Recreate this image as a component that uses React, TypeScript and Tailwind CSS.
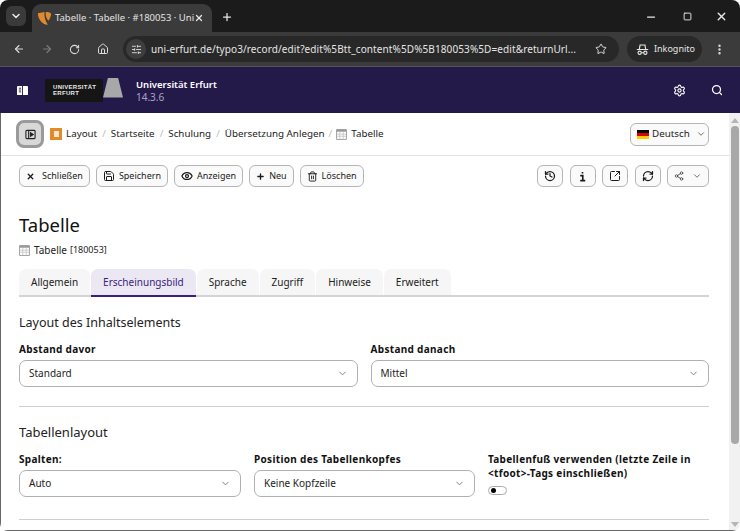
import {
  ArrowLeft,
  ArrowRight,
  ChevronDown,
  Eye,
  History,
  Home,
  Minus,
  MoreVertical,
  Plus,
  RefreshCw,
  RotateCw,
  Save,
  Search,
  Settings,
  Share2,
  SlidersHorizontal,
  Square,
  SquareArrowOutUpRight,
  Star,
  Trash2,
  X,
} from 'lucide-react';
import type { ReactNode } from 'react';

const tabs = ['Allgemein', 'Erscheinungsbild', 'Sprache', 'Zugriff', 'Hinweise', 'Erweitert'];

function TableIcon({ className }: { className?: string }) {
  return (
    <svg viewBox="0 0 16 16" className={className}>
      <rect x="1" y="1" width="14" height="14" fill="#fff" stroke="#777" />
      <rect x="1" y="1" width="14" height="3" fill="#999" />
      <path d="M1 7.5h14M1 10.5h14M5.5 4v11M10.5 4v11" stroke="#bbb" />
    </svg>
  );
}

function DocButton({ icon, label }: { icon: ReactNode; label: string }) {
  return (
    <button className="flex h-[22px] items-center gap-[4px] rounded-[6px] border border-[#b5b5b5] bg-[#fafafa] px-[6px] text-[9px] text-[#1a1a1a]">
      {icon}
      {label}
    </button>
  );
}

function IconButton({ children, wide }: { children: ReactNode; wide?: boolean }) {
  return (
    <button
      className={`flex h-[22px] items-center justify-center gap-[8px] rounded-[6px] border border-[#b5b5b5] bg-[#fafafa] text-[#1a1a1a] ${
        wide ? 'w-[42px]' : 'w-[26px]'
      }`}
    >
      {children}
    </button>
  );
}

function SelectField({ label, value, className }: { label: string; value: string; className: string }) {
  return (
    <div className={className}>
      <div className="mb-[4px] text-[10px] leading-[14px] font-bold tracking-[0.32px] text-[#111]">{label}</div>
      <div className="flex h-[27px] items-center justify-between rounded-[7px] border border-[#b0b0b0] bg-white pr-[9px] pl-[9px] text-[10px] text-[#222]">
        {value}
        <ChevronDown className="h-[11px] w-[11px] text-[#777]" />
      </div>
    </div>
  );
}

export default function App() {
  return (
    <div className="flex h-[531px] w-[740px] flex-col overflow-hidden rounded-[8px] bg-white font-['Noto_Sans',sans-serif]">
      {/* browser tab strip */}
      <div className="flex h-[32px] items-end bg-[#1b1b1b] pl-[6px] text-[#e8e8e8]">
        <div className="mb-[6px] flex h-[20px] w-[20px] items-center justify-center rounded-[6px] bg-[#3a3a3a]">
          <ChevronDown className="h-[12px] w-[12px]" strokeWidth={3} />
        </div>
        <div className="ml-[6px] flex h-[28px] w-[180px] items-center rounded-t-[9px] bg-[#3b3b3b] pr-[8px] pl-[5px]">
          <svg viewBox="0 0 16 16" className="h-[15px] w-[15px] shrink-0">
            <path d="M1 2.500 8 1C7.500 6 9 11 11.500 14.500 6.500 16 .5 8 1 2.500Z" fill="#e08a2c" />
            <path d="M9.500 1c2.500 0 5.500.5 5.500 2.500 0 2-1.500 5-2.800 7C10 8 8.500 4 9.500 1Z" fill="#e08a2c" />
          </svg>
          <span className="ml-[3px] min-w-0 flex-1 text-[9.500px] whitespace-nowrap text-[#e3e3e3]">
            Tabelle · Tabelle · #180053 · Uni
          </span>
          <X className="h-[10px] w-[10px] shrink-0" strokeWidth={3} />
        </div>
        <Plus className="mb-[9px] ml-[9px] h-[12px] w-[12px]" strokeWidth={2.5} />
        <div className="mb-[9px] ml-auto flex items-center pr-[12px]">
          <Minus className="h-[12px] w-[12px]" strokeWidth={2.5} />
          <Square className="ml-[26px] h-[9px] w-[9px]" strokeWidth={2.5} />
          <X className="ml-[23px] h-[13px] w-[13px]" strokeWidth={2.5} />
        </div>
      </div>
      {/* browser toolbar */}
      <div className="flex h-[35px] items-center border-b border-[#555] bg-[#3b3b3b] pl-[13px] text-[#dcdcdc]">
        <ArrowLeft className="h-[12px] w-[12px]" strokeWidth={2.2} />
        <ArrowRight className="ml-[16px] h-[12px] w-[12px] text-[#7b7b7b]" strokeWidth={2.2} />
        <RotateCw className="ml-[16px] h-[11px] w-[11px]" strokeWidth={2.2} />
        <Home className="ml-[17px] h-[12px] w-[12px]" strokeWidth={2} />
        <div className="ml-[14px] flex h-[26px] w-[496px] items-center rounded-full bg-[#282828]">
          <div className="ml-[3px] flex h-[20px] w-[20px] items-center justify-center rounded-full bg-[#3e3e3e]">
            <SlidersHorizontal className="h-[11px] w-[11px]" />
          </div>
          <span className="ml-[5px] w-[428px] text-[10px] tracking-[0.1px] whitespace-nowrap text-[#e6e6e6]">
            uni-erfurt.de/typo3/record/edit?edit%5Btt_content%5D%5B180053%5D=edit&amp;returnUrl...
          </span>
          <Star className="ml-[16px] h-[12px] w-[12px]" strokeWidth={2} />
        </div>
        <div className="ml-[8px] flex h-[26px] w-[75px] items-center rounded-full bg-[#282828] pl-[9px] text-[9px] text-[#e6e6e6]">
          <svg viewBox="0 0 16 16" className="h-[13px] w-[13px]" fill="none" stroke="currentColor" strokeWidth="1.4">
            <path d="M1 8h14M4 8l1-5.500h6L12 8" />
            <circle cx="4.500" cy="12" r="2" />
            <circle cx="11.500" cy="12" r="2" />
            <path d="M6.500 12h3" />
          </svg>
          <span className="ml-[5px]">Inkognito</span>
        </div>
        <MoreVertical className="ml-[11px] h-[13px] w-[13px]" strokeWidth={2.5} />
      </div>
      {/* typo3 top bar */}
      <div className="flex h-[46px] items-center bg-[#241a4a] pl-[17px] text-white">
        <svg viewBox="0 0 12 12" className="h-[11px] w-[11px]">
          <rect x="0" y="1" width="12" height="10" rx="1" fill="#fff" />
          <path d="M6 1v10" stroke="#241a4a" />
          <path d="M2 3.500h2.500M2 5.500h2.500M2 7.500h2.500" stroke="#241a4a" />
        </svg>
        <div className="ml-[17px] flex h-[23px] w-[78px] items-center">
          <div className="flex h-[23px] w-[58px] flex-col justify-center bg-[#151515] pl-[8px] font-['Liberation_Sans',sans-serif] text-[6px] leading-[6.500px] font-bold tracking-[0.3px] text-[#e8e8e8]">
            <span>UNIVERSITÄT</span>
            <span>ERFURT</span>
          </div>
          <div className="mb-[4px] h-[20px] w-[20px] self-end bg-[#a8a8a8] [clip-path:polygon(25%_0,75%_0,100%_100%,0_100%)]" />
        </div>
        <div className="ml-[13px] flex flex-col">
          <span className="text-[9.500px] leading-[13px] font-semibold">Universität Erfurt</span>
          <span className="text-[10px] leading-[12px] text-[#a9a4c4]">14.3.6</span>
        </div>
        <Settings className="mr-[25px] ml-auto h-[13px] w-[13px]" />
        <Search className="mr-[17px] h-[12px] w-[12px]" strokeWidth={2.5} />
      </div>
      {/* module content with scrollbar */}
      <div className="flex min-h-0 flex-1 border-b border-l border-[#666] bg-white">
        <div className="min-w-0 flex-1">
          {/* breadcrumb */}
          <div className="flex h-[43px] items-center border-b border-[#e2e2e2] pr-[20px] pl-[15px] text-[9.800px] text-[#222]">
            <div className="flex h-[28px] w-[28px] items-center justify-center rounded-[8px] border-[3px] border-[#9a9a9a] bg-[#d8d8d8]">
              <svg viewBox="0 0 12 12" className="h-[11px] w-[11px]" fill="none" stroke="#222" strokeWidth="1.200">
                <rect x="1" y="1.500" width="10" height="9" rx="1" />
                <path d="M4 1.500v9" />
                <path d="M6 4l3 2-3 2z" fill="#222" />
              </svg>
            </div>
            <div className="ml-[6px] flex h-[12px] w-[12px] items-center justify-center bg-[#e08a2c]">
              <div className="h-[6px] w-[5px] bg-[#fbe6c8]" />
            </div>
            <span className="ml-[4px]">Layout</span>
            <span className="mx-[5px] text-[#bbb]">/</span>
            <span>Startseite</span>
            <span className="mx-[5px] text-[#bbb]">/</span>
            <span>Schulung</span>
            <span className="mx-[5px] text-[#bbb]">/</span>
            <span>Übersetzung Anlegen</span>
            <span className="mx-[4px] text-[#bbb]">/</span>
            <TableIcon className="h-[11px] w-[11px]" />
            <span className="ml-[4px]">Tabelle</span>
            <button className="ml-auto flex h-[23px] w-[79px] items-center rounded-[6px] border border-[#b5b5b5] bg-[#fafafa] pl-[6px]">
              <div className="flex h-[9px] w-[12px] flex-col">
                <div className="flex-1 bg-black" />
                <div className="flex-1 bg-[#d00]" />
                <div className="flex-1 bg-[#fc0]" />
              </div>
              <span className="ml-[3px]">Deutsch</span>
              <ChevronDown className="ml-[6px] h-[10px] w-[10px] text-[#555]" />
            </button>
          </div>
          {/* buttons */}
          <div className="flex items-center pt-[9px] pr-[20px] pl-[18px]">
            <div className="flex gap-[6px]">
              <DocButton icon={<X className="mr-[3px] h-[9px] w-[9px]" strokeWidth={3.5} />} label="Schließen" />
              <DocButton icon={<Save className="h-[12px] w-[12px]" />} label="Speichern" />
              <DocButton icon={<Eye className="h-[12px] w-[12px]" strokeWidth={2.5} />} label="Anzeigen" />
              <DocButton icon={<Plus className="h-[9px] w-[9px]" strokeWidth={3.5} />} label="Neu" />
              <DocButton icon={<Trash2 className="h-[11px] w-[11px]" />} label="Löschen" />
            </div>
            <div className="ml-auto flex gap-[6.500px]">
              <IconButton><History className="h-[12px] w-[12px]" strokeWidth={2.5} /></IconButton>
              <IconButton>
                <svg viewBox="0 0 12 12" className="h-[11px] w-[11px]" fill="none" stroke="currentColor" strokeWidth="1.800">
                  <path d="M6 1v1.800M3.500 5H6.300v5.500M3.500 10.500h5.500" />
                </svg>
              </IconButton>
              <IconButton><SquareArrowOutUpRight className="h-[12px] w-[12px]" strokeWidth={2} /></IconButton>
              <IconButton><RefreshCw className="h-[12px] w-[12px]" strokeWidth={2.5} /></IconButton>
              <IconButton wide>
                <Share2 className="h-[10px] w-[10px] text-[#444]" />
                <ChevronDown className="h-[10px] w-[10px] text-[#555]" />
              </IconButton>
            </div>
          </div>
          {/* form */}
          <div className="pr-[20px] pl-[18px]">
            <h1 className="mt-[26px] text-[18.500px] leading-[24px] text-[#111]">Tabelle</h1>
            <div className="mt-[6px] flex items-center text-[10px] leading-[14px] text-[#222]">
              <TableIcon className="mr-[4px] h-[11px] w-[11px]" />
              Tabelle
              <span className="ml-[3px] text-[9px]">[180053]</span>
            </div>
            <div className="mt-[12px] flex gap-[1px] border-b-2 border-[#d4d4d4]">
              {tabs.map((tab) => (
                <div
                  key={tab}
                  className={
                    tab === 'Erscheinungsbild'
                      ? '-mb-[2px] flex h-[28px] items-center rounded-t-[7px] border-b-2 border-[#3b1c80] bg-[#ebe8f4] px-[12px] text-[10px] text-[#3b1c80]'
                      : 'flex h-[26px] items-center rounded-t-[7px] bg-[#f6f6f6] px-[12px] text-[10px] text-[#222]'
                  }
                >
                  {tab}
                </div>
              ))}
            </div>
            <h2 className="mt-[17px] text-[12.500px] leading-[18px] text-[#222]">Layout des Inhaltselements</h2>
            <div className="mt-[10px] flex gap-[13px]">
              <SelectField label="Abstand davor" value="Standard" className="flex-1" />
              <SelectField label="Abstand danach" value="Mittel" className="flex-1" />
            </div>
            <div className="mt-[19px] border-t border-[#cfcfcf]" />
            <h2 className="mt-[16px] text-[13px] leading-[18px] text-[#222]">Tabellenlayout</h2>
            <div className="mt-[11px] flex gap-[13px]">
              <SelectField label="Spalten:" value="Auto" className="w-[222px]" />
              <SelectField label="Position des Tabellenkopfes" value="Keine Kopfzeile" className="w-[221px]" />
              <div className="flex-1">
                <div className="text-[10px] leading-[14px] font-bold tracking-[0.32px] text-[#111]">
                  Tabellenfuß verwenden (letzte Zeile in &lt;tfoot&gt;-Tags einschließen)
                </div>
                <div className="mt-[6px] flex h-[9px] w-[19px] items-center rounded-full border border-[#aaa] pl-[2px]">
                  <div className="h-[5px] w-[5px] rounded-full bg-black" />
                </div>
              </div>
            </div>
            <div className="mt-[22px] border-t border-[#cfcfcf]" />
          </div>
        </div>
        {/* scrollbar */}
        <div className="flex w-[11px] flex-col items-center bg-[#f1f1f1] pt-[5px] pb-[3px]">
          <div className="h-0 w-0 border-x-[4px] border-b-[5px] border-x-transparent border-b-[#b5b5b5]" />
          <div className="mt-[3px] h-[318px] w-[8px] rounded-full bg-[#a8a8a8]" />
          <div className="mt-auto h-0 w-0 border-x-[4px] border-t-[5px] border-x-transparent border-t-[#b5b5b5]" />
        </div>
      </div>
    </div>
  );
}
